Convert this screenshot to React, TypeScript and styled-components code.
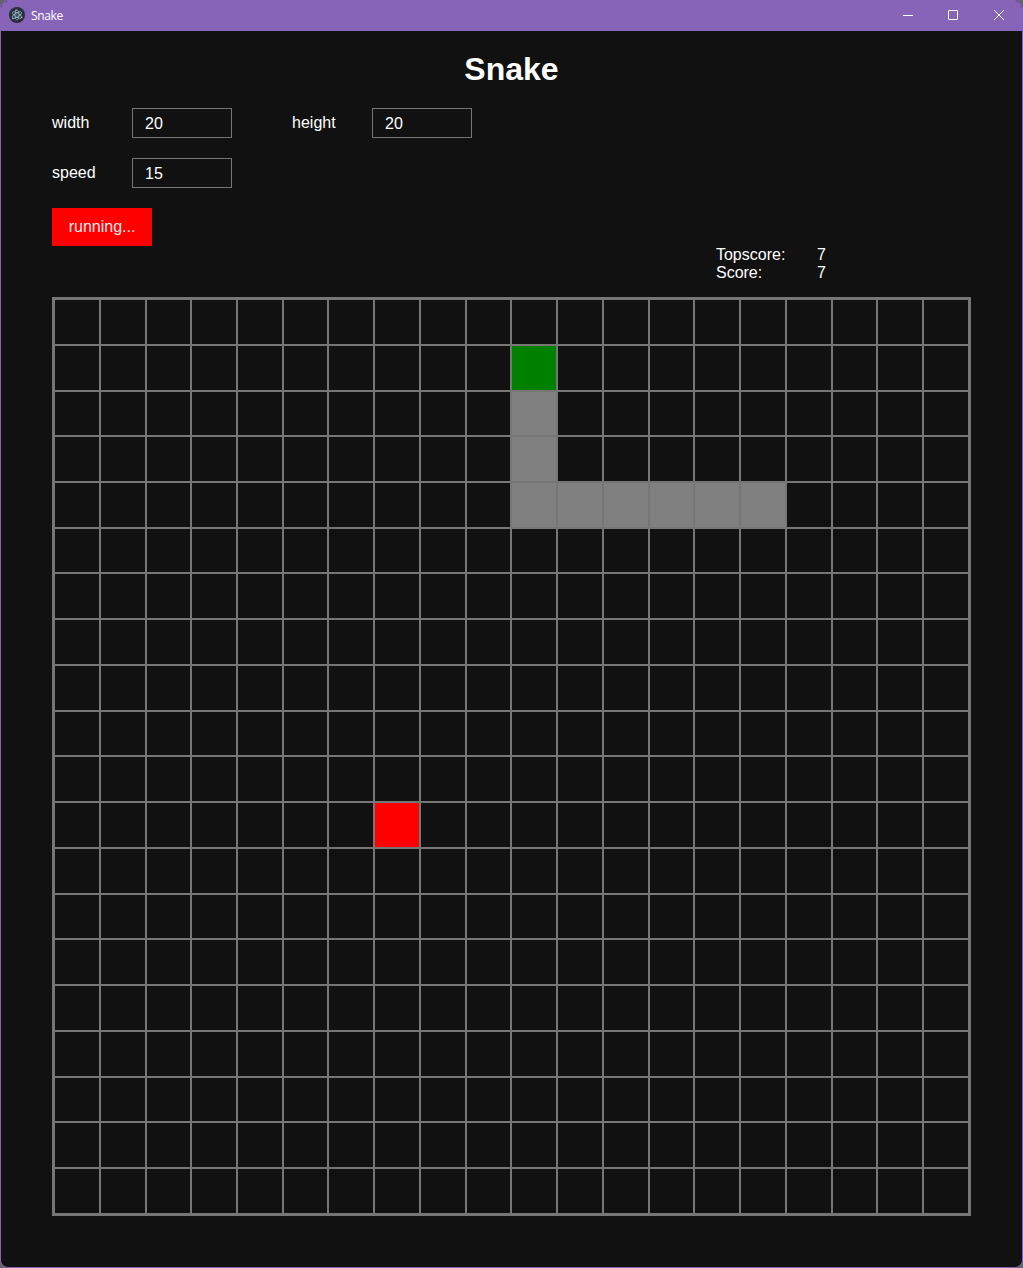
import React from 'react';
import styled, { createGlobalStyle } from 'styled-components';

const GlobalStyle = createGlobalStyle`
  *, *::before, *::after { box-sizing: border-box; }
  body {
    margin: 0;
    background: #666469;
    font-family: "Liberation Sans", Arial, sans-serif;
    font-size: 16px;
    color: #fff;
  }
`;

const Window = styled.div`
  width: 1023px;
  height: 1268px;
  display: flex;
  flex-direction: column;
  overflow: hidden;
  background: #111;
  border: 1px solid #8764b8;
  border-radius: 8px;
`;

const TitleBar = styled.header`
  flex: none;
  height: 30px;
  display: flex;
  align-items: center;
  background: #8764b8;
`;

const AppIcon = styled.svg`
  display: block;
  width: 16px;
  height: 16px;
  margin: 0 6px 2px 8px;
`;

const Caption = styled.span`
  flex: 1;
  font-family: "Open Sans", "Noto Sans", sans-serif;
  font-size: 12px;
  line-height: 16px;
  letter-spacing: -0.35px;
`;

const Control = styled.button<{ $width: number }>`
  width: ${(p) => p.$width}px;
  height: 30px;
  display: grid;
  place-items: center;
  padding: 0 0 2px;
  border: 0;
  background: none;
  color: #fff;

  svg { display: block; }
`;

const Page = styled.main`
  display: flex;
  flex-direction: column;
  padding: 19px 5% 0;
`;

const Heading = styled.h1`
  margin: 0;
  font-size: 32px;
  line-height: 38px;
  text-align: center;
`;

const Settings = styled.form`
  display: grid;
  grid-template-columns: 240px 240px;
  row-gap: 20px;
  margin-top: 20px;
`;

const Field = styled.label`
  display: grid;
  grid-template-columns: 80px 100px;
  height: 30px;
  line-height: 29px;
`;

const NumberInput = styled.input`
  width: 100px;
  height: 30px;
  padding: 1px 12px 0;
  border: 1px solid #767676;
  border-radius: 0;
  outline: 0;
  background: #111;
  color: #fff;
  font: inherit;
`;

const StartButton = styled.button`
  width: 100px;
  height: 38px;
  margin-top: 20px;
  padding: 0;
  border: 0;
  background: #f00;
  color: rgba(255, 255, 255, 0.95);
  font: inherit;
`;

const Scores = styled.dl`
  display: grid;
  grid-template-columns: 101px 50px;
  align-self: flex-end;
  margin: 0 104px 15.05px 0;
  line-height: 18px;

  dt, dd { margin: 0; }
`;

type CellKind = 'empty' | 'head' | 'body' | 'food';

const fills: Record<CellKind, string> = {
  empty: 'transparent',
  head: '#008000',
  body: '#808080',
  food: '#ff0000',
};

const cellSize = 45.734375;

const Board = styled.div<{ $columns: number; $rows: number }>`
  align-self: flex-start;
  display: grid;
  grid-template-columns: repeat(${(p) => p.$columns}, ${cellSize}px);
  grid-template-rows: repeat(${(p) => p.$rows}, ${cellSize}px);
  border: 2px solid #767676;
`;

const Cell = styled.div<{ $kind: CellKind }>`
  border: 1px solid #767676;
  background: ${(p) => fills[p.$kind]};
`;

const columns = 20;
const rows = 20;
const head = '10,1';
const food = '7,11';
const body = new Set(['10,2', '10,3', '10,4', '11,4', '12,4', '13,4', '14,4', '15,4']);

function kindAt(index: number): CellKind {
  const key = `${index % columns},${Math.floor(index / columns)}`;
  if (key === head) return 'head';
  if (key === food) return 'food';
  return body.has(key) ? 'body' : 'empty';
}

function ElectronIcon() {
  return (
    <AppIcon viewBox="0 0 16 16" aria-hidden="true">
      <circle cx="8" cy="8" r="8" fill="#2b2e3b" />
      <g fill="none" stroke="#9fcfd8" strokeWidth="0.65">
        <ellipse cx="8" cy="8" rx="5.2" ry="2" transform="rotate(30 8 8)" />
        <ellipse cx="8" cy="8" rx="5.2" ry="2" transform="rotate(90 8 8)" />
        <ellipse cx="8" cy="8" rx="5.2" ry="2" transform="rotate(150 8 8)" />
      </g>
      <g fill="#9fcfd8">
        <circle cx="8" cy="8" r="0.6" />
        <circle cx="3.9" cy="11.4" r="0.75" />
        <circle cx="12.7" cy="10.4" r="0.75" />
        <circle cx="7" cy="3.2" r="0.75" />
      </g>
    </AppIcon>
  );
}

function SettingField({ label, value }: { label: string; value: number }) {
  return (
    <Field>
      <span>{label}</span>
      <NumberInput defaultValue={value} />
    </Field>
  );
}

export default function App() {
  return (
    <>
      <GlobalStyle />
      <Window>
        <TitleBar>
          <ElectronIcon />
          <Caption>Snake</Caption>
          <Control $width={44} aria-label="Minimize">
            <svg width="10" height="10" viewBox="0 0 10 10">
              <path d="M0 5.5H10" stroke="currentColor" />
            </svg>
          </Control>
          <Control $width={46} aria-label="Maximize">
            <svg width="10" height="10" viewBox="0 0 10 10">
              <rect x="0.5" y="0.5" width="9" height="9" rx="0.5" fill="none" stroke="currentColor" />
            </svg>
          </Control>
          <Control $width={46} aria-label="Close">
            <svg width="10" height="10" viewBox="0 0 10 10">
              <path d="M0 0L10 10M10 0L0 10" stroke="currentColor" />
            </svg>
          </Control>
        </TitleBar>
        <Page>
          <Heading>Snake</Heading>
          <Settings>
            <SettingField label="width" value={20} />
            <SettingField label="height" value={20} />
            <SettingField label="speed" value={15} />
          </Settings>
          <StartButton type="button">running...</StartButton>
          <Scores>
            <dt>Topscore:</dt>
            <dd>7</dd>
            <dt>Score:</dt>
            <dd>7</dd>
          </Scores>
          <Board $columns={columns} $rows={rows}>
            {Array.from({ length: columns * rows }, (_, i) => (
              <Cell key={i} $kind={kindAt(i)} />
            ))}
          </Board>
        </Page>
      </Window>
    </>
  );
}
